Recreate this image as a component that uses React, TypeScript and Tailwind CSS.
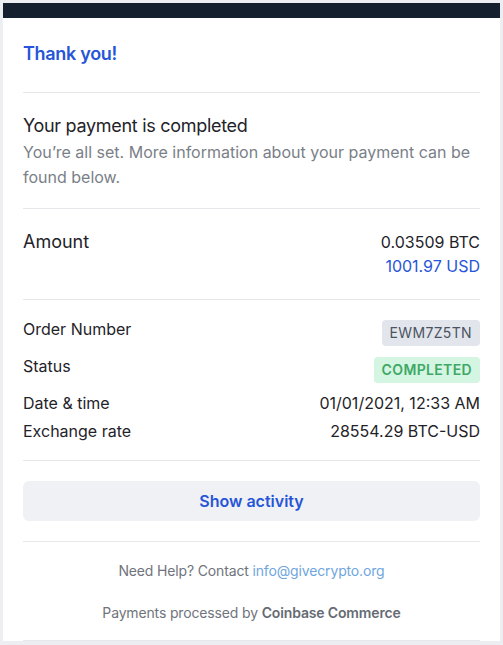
const rows = [
    { label: 'Date & time', value: '01/01/2021, 12:33 AM' },
    { label: 'Exchange rate', value: '28554.29 BTC-USD' },
];

const App = () => {
    return (
        <div className="min-h-screen bg-[#eceef1] px-[3px] pt-[3px] pb-[4px] font-['Inter',sans-serif] text-[#1f2329]">
            <div className="bg-white">
                <div className="h-[15px] bg-[#15202e]" />
                <div className="px-5">
                    <div className="pt-[22px] pb-[24px] border-b border-[#e5e7eb]">
                        <h1 className="text-[18px] leading-[28px] font-semibold tracking-[-0.3px] text-[#2655d8]">Thank you!</h1>
                    </div>

                    <div className="pt-[19px] pb-[18px] border-b border-[#e5e7eb]">
                        <h2 className="text-[18px] leading-[28px] tracking-[-0.3px]">Your payment is completed</h2>
                        <p className="text-[16px] leading-[25px] text-[#7a7f88]">
                            You’re all set. More information about your payment can be found below.
                        </p>
                    </div>

                    <div className="pt-[21px] pb-[21px] border-b border-[#e5e7eb] flex justify-between leading-[24px]">
                        <span className="text-[18px]">Amount</span>
                        <div className="text-right text-[16px]">
                            <div>0.03509 BTC</div>
                            <div className="text-[#2655d8]">1001.97 USD</div>
                        </div>
                    </div>

                    <div className="pt-[17px] pb-[17px] border-b border-[#e5e7eb] text-[16px] leading-[24px]">
                        <div className="h-[37px] flex justify-between items-start">
                            <span>Order Number</span>
                            <span className="mt-[3px] h-[26px] px-2 flex items-center rounded bg-[#e2e6ec] text-[14px] tracking-wide text-[#4b5361]">
                                EWM7Z5TN
                            </span>
                        </div>
                        <div className="h-[37px] flex justify-between items-start">
                            <span>Status</span>
                            <span className="mt-[3px] h-[26px] px-2 flex items-center rounded bg-[#d3f5e1] text-[14px] font-semibold tracking-wide text-[#3fa866]">
                                COMPLETED
                            </span>
                        </div>
                        {rows.map((r, i) => (
                            <div key={r.label} className={`flex justify-between ${i === 0 ? 'h-[28px]' : 'h-[24px]'}`}>
                                <span>{r.label}</span>
                                <span>{r.value}</span>
                            </div>
                        ))}
                    </div>

                    <div className="pt-5 pb-5 border-b border-[#e5e7eb]">
                        <button className="w-full h-10 rounded-md bg-[#f0f1f4] text-[16px] font-semibold text-[#2655d8]">
                            Show activity
                        </button>
                    </div>

                    <div className="pt-[19px] pb-[17px] border-b border-[#e5e7eb] text-center text-[14px] leading-[20px] tracking-[-0.15px] text-[#6f747c]">
                        <p>
                            Need Help? Contact <a className="text-[#6fa6dd]">info@givecrypto.org</a>
                        </p>
                        <p className="mt-[22px]">
                            Payments processed by <span className="font-semibold text-[#666b73]">Coinbase Commerce</span>
                        </p>
                    </div>
                </div>
            </div>
        </div>
    );
};

export default App;
